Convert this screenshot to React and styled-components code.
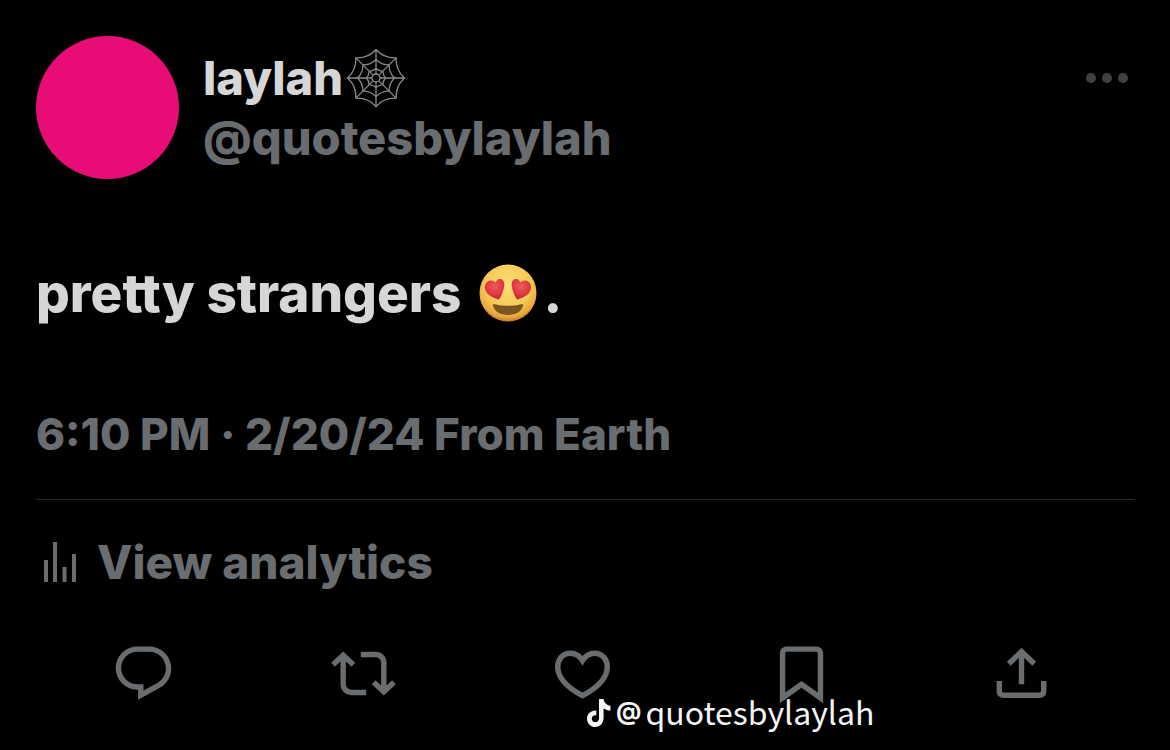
import styled, { createGlobalStyle } from 'styled-components';

const GlobalStyle = createGlobalStyle`
  body {
    margin: 0;
    background: #000;
    font-family: Inter, "Liberation Sans", sans-serif;
  }
`

const Post = styled.article`
  position: relative;
  padding: 36px;
  color: #d6d6d6;
`

const Header = styled.header`
  display: flex;
  align-items: flex-start;
  gap: 24px;
`

const Avatar = styled.div`
  width: 143px;
  height: 143px;
  border-radius: 50%;
  background: #e80d76;
`

const Author = styled.div`
  flex: 1;
  padding-top: 12px;
`

const Name = styled.h1`
  display: flex;
  align-items: center;
  gap: 3px;
  margin: 0;
  font-size: 47px;
  font-weight: 800;
  line-height: 60px;
`

const Handle = styled.a`
  display: block;
  color: #6a6d70;
  font-size: 47px;
  font-weight: 800;
  line-height: 60px;
  text-decoration: none;
`

const MoreButton = styled.button`
  display: flex;
  gap: 6px;
  margin: 37px 6px 0 0;
  padding: 0;
  border: 0;
  background: none;
  cursor: pointer;
`

const Dot = styled.span`
  width: 10px;
  height: 10px;
  border-radius: 50%;
  background: #3f4042;
`

const Message = styled.p`
  display: flex;
  align-items: center;
  margin: 80px 0 0;
  font-size: 53px;
  font-weight: 800;
  line-height: 68px;
`

const Emoji = styled.svg`
  width: 58px;
  height: 58px;
  margin: 0 6px 0 18px;
`

const Meta = styled.p`
  margin: 77px 0 0;
  padding-bottom: 35px;
  border-bottom: 1px solid #2b2c2e;
  color: #6a6d70;
  font-size: 44px;
  font-weight: 800;
  line-height: 60px;
`

const Analytics = styled.a`
  display: flex;
  align-items: center;
  gap: 20px;
  margin-top: 32px;
  padding-left: 8px;
  color: #6a6d70;
  font-size: 46px;
  font-weight: 800;
  line-height: 60px;
  text-decoration: none;
`

const Actions = styled.div`
  display: grid;
  grid-template-columns: repeat(5, 1fr);
  justify-items: center;
  margin: 49px 3px 0 -2px;
`

const ActionButton = styled.button`
  display: flex;
  padding: 0;
  border: 0;
  background: none;
  color: #6a6d70;
  cursor: pointer;
`

const ActionIcon = styled.svg`
  width: 65px;
  height: 65px;
  fill: ${props => props.$outline ? 'none' : 'currentColor'};
  stroke: ${props => props.$outline ? 'currentColor' : 'none'};
  stroke-width: 2;
`

// sits on top of the action row
const Watermark = styled.div`
  position: absolute;
  left: 586px;
  top: 687px;
  display: flex;
  align-items: center;
  color: #f4f4f4;
  font-family: "Noto Sans CJK SC", "Noto Sans", sans-serif;
  font-size: 32px;
  line-height: 48px;
`

const AtSign = styled.span`
  margin: 0 4px;
  font-family: Inter, sans-serif;
  font-size: 25px;
  font-weight: 700;
`

const point = (radius, step) => {
  const angle = (step * Math.PI) / 8;
  return `${(30 + radius * Math.sin(angle)).toFixed(2)} ${(30 - radius * Math.cos(angle)).toFixed(2)}`;
};

const webRing = (radius, sag) => {
  let d = `M${point(radius, 0)}`;
  for (let i = 0; i < 16; i += 2) {
    d += `Q${point(radius * sag, i + 1)} ${point(radius, i + 2)}`;
  }
  return d;
};

const WebIcon = () => (
  <svg width="60" height="60" viewBox="0 0 60 60" fill="none" stroke="#8b8b8b" strokeWidth="1.3">
    {[0, 2, 4, 6].map(i => <path key={i} d={`M${point(28.5, i)}L${point(28.5, i + 8)}`} />)}
    <path d={webRing(28.5, 0.74)} />
    <path d={webRing(18.5, 0.76)} />
    <path d={webRing(9.5, 0.8)} />
    <circle cx="30" cy="30" r="4" fill="#000" />
  </svg>
);

const heartPath = 'M20 35.500C13.500 34 7.500 30.500 6.200 25.500C5 20.800 7.600 17 11.600 16.500C13.800 16.300 15.600 17.100 16.600 18.700C17.200 16.700 18.700 15.200 20.700 15.100C24.600 15 26 19 25 23.500C24.100 28 22.200 32 20 35.500Z';

const HeartEyes = () => (
  <Emoji viewBox="0 0 58 58" role="img" aria-label="heart eyes">
    <defs>
      <radialGradient id="face" cx="0.5" cy="0.36" r="0.64">
        <stop offset="0" stopColor="#fbe07a" />
        <stop offset="0.6" stopColor="#f6cb58" />
        <stop offset="0.88" stopColor="#e9a73c" />
        <stop offset="1" stopColor="#c77a26" />
      </radialGradient>
      <radialGradient id="heart" cx="0.5" cy="0.35" r="0.65">
        <stop offset="0" stopColor="#ee5a58" />
        <stop offset="0.7" stopColor="#dd3640" />
        <stop offset="1" stopColor="#bd2430" />
      </radialGradient>
    </defs>
    <circle cx="29" cy="29" r="28.5" fill="url(#face)" />
    <path d={heartPath} fill="url(#heart)" />
    <path d={heartPath} fill="url(#heart)" transform="translate(58 0) scale(-1 1)" />
    <path d="M13.800 41Q14 39.700 15.500 40.200Q29 43.500 42.500 40.200Q44 39.700 44.200 41C43 47.500 37 51 29 51C21 51 15 47.500 13.800 41Z" fill="#7d5520" />
  </Emoji>
);

const BarsIcon = () => (
  <svg width="33" height="42" viewBox="0 0 33 42" fill="currentColor">
    <path d="M0 19h4v22H0zM9 1h4v40H9zM18.500 26h4v15h-4zM28 13h4v28h-4z" />
  </svg>
);

const TikTokIcon = () => (
  <svg width="26" height="34" viewBox="0 -4 26 34" fill="currentColor">
    <path d="M13 1h4.600c.4 3.600 2.900 6.300 6.900 6.700v4.900c-2.700 0-5-.8-6.900-2.100v9.300C17.600 25.300 14 29 9.300 29S1 25.300 1 20.700c0-4.900 4.100-8.700 9.300-8.200v5c-2.500-.6-4.500 1-4.500 3.200 0 1.900 1.500 3.400 3.500 3.400 2.200 0 3.700-1.500 3.700-3.900V1Z" />
  </svg>
);

const actions = [
  {
    label: 'Reply',
    d: 'M1.751 10c0-4.420 3.584-8 8.005-8h4.366c4.490 0 8.129 3.640 8.129 8.130 0 2.960-1.607 5.680-4.196 7.110l-8.054 4.460v-3.690h-.067c-4.490.1-8.183-3.510-8.183-8.010zm8.005-6c-3.317 0-6.005 2.690-6.005 6 0 3.370 2.770 6.080 6.138 6.010l.351-.01h1.761v2.300l5.087-2.810c1.951-1.080 3.163-3.130 3.163-5.360 0-3.390-2.744-6.130-6.129-6.130H9.756z',
  },
  {
    label: 'Repost',
    d: 'M4.500 3.880l4.432 4.140-1.364 1.460L5.500 7.550V16c0 1.100.896 2 2 2H13v2H7.500c-2.209 0-4-1.790-4-4V7.550L1.432 9.480.068 8.020 4.500 3.880zM16.500 6H11V4h5.500c2.209 0 4 1.790 4 4v8.450l2.068-1.930 1.364 1.460-4.432 4.140-4.432-4.140 1.364-1.460 2.068 1.930V8c0-1.100-.896-2-2-2z',
  },
  {
    label: 'Like',
    outline: true,
    d: 'M12 7.200C10.900 5.400 9.300 4.500 7.500 4.500C4.800 4.500 2.850 6.700 2.850 9.600C2.850 13.600 6.600 17.300 12 20.200C17.400 17.300 21.150 13.600 21.150 9.600C21.150 6.700 19.200 4.500 16.500 4.500C14.700 4.500 13.100 5.400 12 7.200Z',
  },
  {
    label: 'Bookmark',
    d: 'M4 4.500C4 3.120 5.119 2 6.500 2h11C18.881 2 20 3.120 20 4.500v18.440l-8-5.710-8 5.710V4.500zM6.500 4c-.276 0-.5.220-.5.500v14.560l6-4.290 6 4.290V4.500c0-.280-.224-.5-.5-.5h-11z',
  },
  {
    label: 'Share',
    outline: true,
    d: 'M7.300 8.400L12 3.900L16.700 8.400M12 4V16M3.800 14.800V18.500Q3.800 20 5.300 20H18.700Q20.200 20 20.200 18.500V14.800',
  },
];

export default function App() {
  return (
    <>
      <GlobalStyle />
      <Post>
        <Header>
          <Avatar />
          <Author>
            <Name>laylah<WebIcon /></Name>
            <Handle href="#profile">@quotesbylaylah</Handle>
          </Author>
          <MoreButton aria-label="More">
            <Dot /><Dot /><Dot />
          </MoreButton>
        </Header>
        <Message>pretty strangers<HeartEyes />.</Message>
        <Meta>6:10 PM · 2/20/24 From Earth</Meta>
        <Analytics href="#analytics"><BarsIcon />View analytics</Analytics>
        <Actions>
          {actions.map(action => (
            <ActionButton key={action.label} aria-label={action.label}>
              <ActionIcon viewBox="0 0 24 24" $outline={action.outline}>
                <path d={action.d} />
              </ActionIcon>
            </ActionButton>
          ))}
        </Actions>
        <Watermark>
          <TikTokIcon />
          <AtSign>@</AtSign>
          quotesbylaylah
        </Watermark>
      </Post>
    </>
  );
}
